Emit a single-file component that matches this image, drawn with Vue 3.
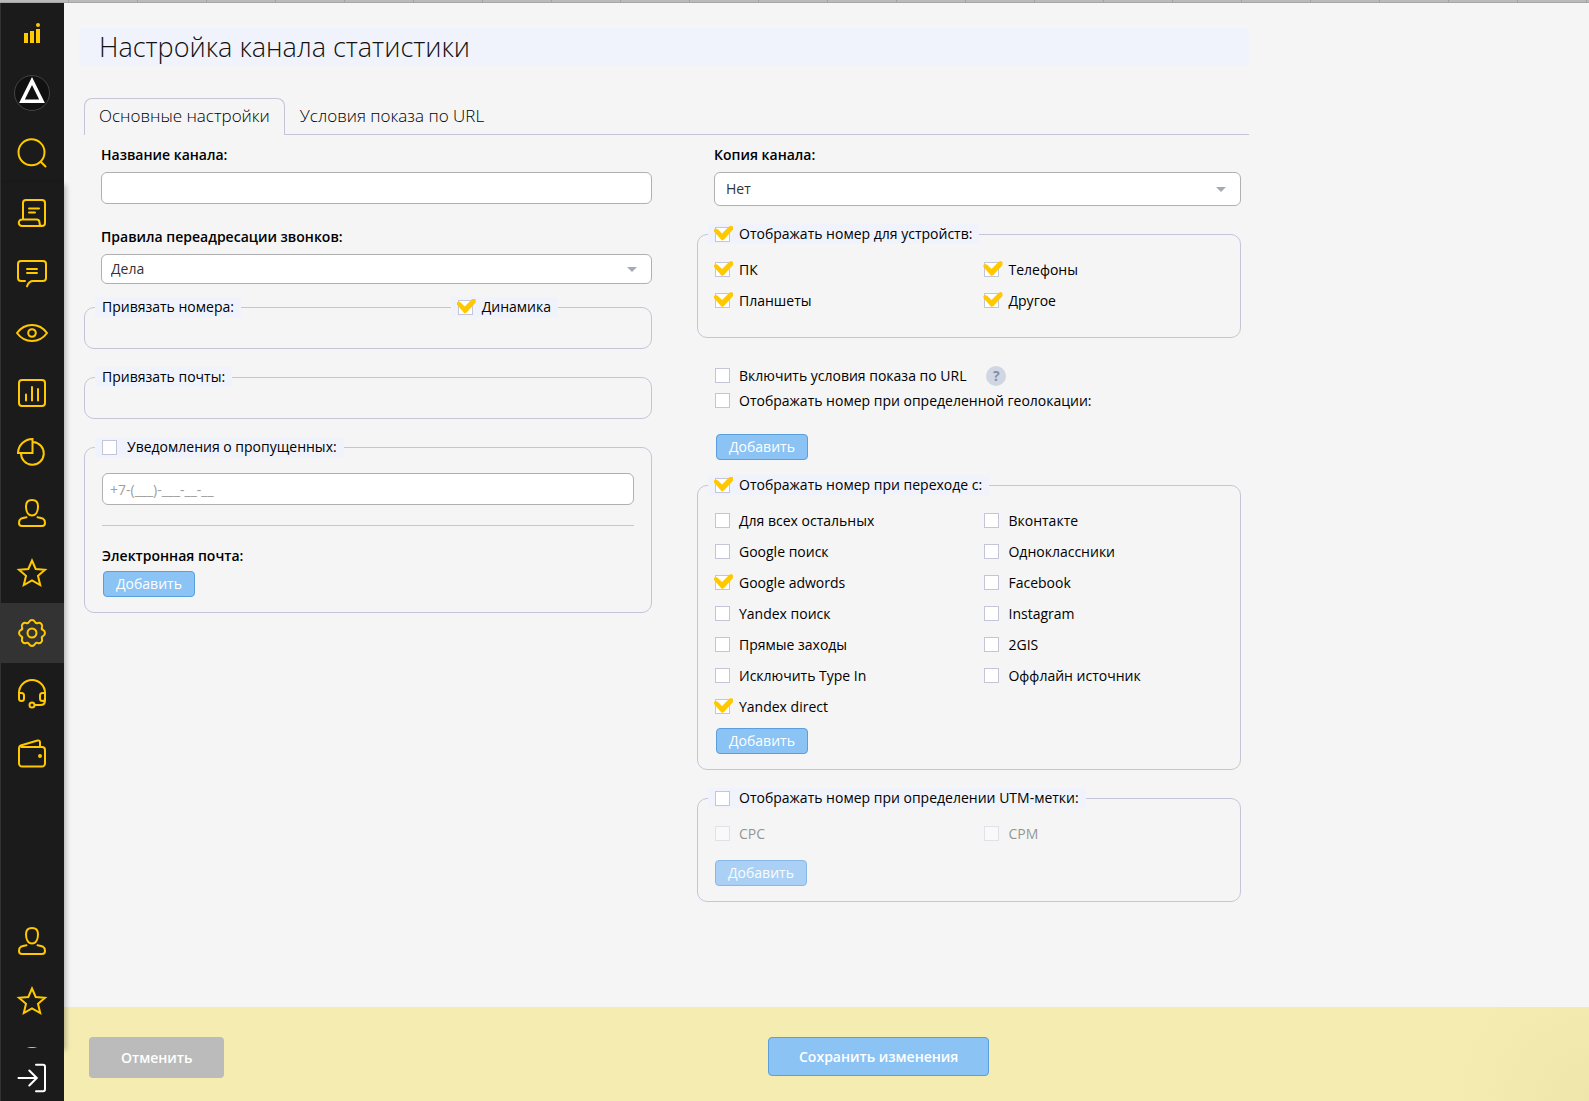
<template>
  <div class="app">
    <div class="strip"></div>
    <div class="shell">
      <aside class="sidebar">
        <div class="side-head">
          <a class="item" href="#" aria-label="Главная">
            <svg viewBox="0 0 32 32" class="icon solid">
              <path d="M8 16h4v10H8zM14 14h4v12h-4zM20 12h4v14h-4z" />
              <circle cx="22" cy="8" r="2" />
            </svg>
          </a>
          <a class="item" href="#" aria-label="Проект">
            <svg viewBox="0 0 38 38" class="avatar">
              <circle cx="19" cy="19" r="17.5" fill="#111" stroke="#444" />
              <path d="M19 7L29 27.2H9z" fill="none" stroke="#fff" stroke-width="3.6" />
            </svg>
          </a>
          <a class="item" href="#" aria-label="Поиск">
            <svg viewBox="0 0 32 32" class="icon"><path :d="icons.search" /></svg>
          </a>
        </div>
        <div class="side-body">
          <nav>
            <a
              v-for="name in topMenu"
              :key="name"
              class="item"
              :class="{ active: name === 'gear' }"
              href="#"
              :aria-label="name"
            >
              <svg viewBox="0 0 32 32" class="icon"><path :d="icons[name]" /></svg>
            </a>
          </nav>
          <nav class="pinned">
            <a v-for="name in bottomMenu" :key="name" class="item" href="#" :aria-label="name">
              <svg viewBox="0 0 32 32" class="icon"><path :d="icons[name]" /></svg>
            </a>
          </nav>
        </div>
        <a class="exit" href="#" aria-label="Выход">
          <svg viewBox="0 0 32 32" class="icon"><path :d="icons.exit" /></svg>
        </a>
      </aside>

      <main class="main">
        <div class="content">
          <h1>Настройка канала статистики</h1>

          <div class="tabs">
            <button
              v-for="(t, i) in tabs"
              :key="t"
              class="tab"
              :class="{ current: tab === i }"
              @click="tab = i"
            >{{ t }}</button>
          </div>

          <form class="columns" @submit.prevent>
            <div class="col">
              <div class="field">
                <label for="name">Название канала:</label>
                <input id="name" v-model="form.name" class="text" type="text" />
              </div>

              <div class="field rules">
                <label for="rules">Правила переадресации звонков:</label>
                <div class="select">
                  <select id="rules" v-model="form.rules">
                    <option>Дела</option>
                  </select>
                </div>
              </div>

              <fieldset class="group empty">
                <legend>Привязать номера:</legend>
                <label class="check dynamic">
                  <input v-model="form.dynamic" type="checkbox" />Динамика
                </label>
              </fieldset>

              <fieldset class="group empty">
                <legend>Привязать почты:</legend>
              </fieldset>

              <fieldset class="group missed">
                <legend>
                  <label class="check">
                    <input v-model="form.missed" type="checkbox" />Уведомления о пропущенных:
                  </label>
                </legend>
                <input
                  v-model="form.phone"
                  class="text"
                  type="tel"
                  aria-label="Телефон"
                  placeholder="+7-(___)-___-__-__"
                />
                <hr />
                <p class="caption">Электронная почта:</p>
                <button class="btn" type="button">Добавить</button>
              </fieldset>
            </div>

            <div class="col">
              <div class="field copy">
                <label for="copy">Копия канала:</label>
                <div class="select large">
                  <select id="copy" v-model="form.copy">
                    <option>Нет</option>
                  </select>
                </div>
              </div>

              <fieldset class="group devices">
                <legend>
                  <label class="check">
                    <input v-model="form.byDevice" type="checkbox" />Отображать номер для устройств:
                  </label>
                </legend>
                <div class="options">
                  <label v-for="d in devices" :key="d.label" class="check">
                    <input v-model="d.on" type="checkbox" />{{ d.label }}
                  </label>
                </div>
              </fieldset>

              <div class="extra">
                <div class="extra-row">
                  <label class="check">
                    <input v-model="form.byUrl" type="checkbox" />Включить условия показа по URL
                  </label>
                  <button class="help" type="button">?</button>
                </div>
                <div class="extra-row">
                  <label class="check">
                    <input v-model="form.byGeo" type="checkbox" />Отображать номер при определенной геолокации:
                  </label>
                </div>
                <button class="btn" type="button">Добавить</button>
              </div>

              <fieldset class="group">
                <legend>
                  <label class="check">
                    <input v-model="form.bySource" type="checkbox" />Отображать номер при переходе с:
                  </label>
                </legend>
                <div class="options">
                  <label v-for="s in sources" :key="s.label" class="check">
                    <input v-model="s.on" type="checkbox" />{{ s.label }}
                  </label>
                </div>
                <button class="btn" type="button">Добавить</button>
              </fieldset>

              <fieldset class="group utm">
                <legend>
                  <label class="check">
                    <input v-model="form.byUtm" type="checkbox" />Отображать номер при определении UTM-метки:
                  </label>
                </legend>
                <div class="options">
                  <label v-for="u in utm" :key="u.label" class="check" :class="{ off: !form.byUtm }">
                    <input v-model="u.on" type="checkbox" :disabled="!form.byUtm" />{{ u.label }}
                  </label>
                </div>
                <button class="btn" type="button" :disabled="!form.byUtm">Добавить</button>
              </fieldset>
            </div>
          </form>
        </div>

        <footer class="footer">
          <button class="cancel" type="button">Отменить</button>
          <button class="save" type="button">Сохранить изменения</button>
        </footer>
      </main>
    </div>
  </div>
</template>

<script setup>
import { ref, reactive } from "vue"

const tabs = ["Основные настройки", "Условия показа по URL"]
const tab = ref(0)

const form = reactive({
  name: "",
  rules: "Дела",
  copy: "Нет",
  phone: "",
  dynamic: true,
  missed: false,
  byDevice: true,
  byUrl: false,
  byGeo: false,
  bySource: true,
  byUtm: false
})

const devices = reactive([
  { label: "ПК", on: true },
  { label: "Телефоны", on: true },
  { label: "Планшеты", on: true },
  { label: "Другое", on: true }
])

const sources = reactive([
  { label: "Для всех остальных", on: false },
  { label: "Вконтакте", on: false },
  { label: "Google поиск", on: false },
  { label: "Одноклассники", on: false },
  { label: "Google adwords", on: true },
  { label: "Facebook", on: false },
  { label: "Yandex поиск", on: false },
  { label: "Instagram", on: false },
  { label: "Прямые заходы", on: false },
  { label: "2GIS", on: false },
  { label: "Исключить Type In", on: false },
  { label: "Оффлайн источник", on: false },
  { label: "Yandex direct", on: true }
])

const utm = reactive([
  { label: "CPC", on: false },
  { label: "CPM", on: false }
])

const topMenu = ["scroll", "chat", "eye", "bars", "pie", "user", "star", "gear", "headset", "wallet"]
const bottomMenu = ["user", "star", "headset"]

const icons = {
  search: "M2.5 15.3a13 13 0 1 0 26 0a13 13 0 1 0-26 0M24.5 24.5l5 5",
  scroll:
    "M7 22.5V6a3 3 0 0 1 3-3h16a3 3 0 0 1 3 3v20a3 3 0 0 1-3 3H6a3.2 3.2 0 0 1 0-6.5h14.5q3 0 3 3q0 3.5 2.5 3.5M13 11.5h10M13 15.5h6",
  chat:
    "M9 24H5a3 3 0 0 1-3-3V7a3 3 0 0 1 3-3h22a3 3 0 0 1 3 3v14a3 3 0 0 1-3 3H17q-4 0-6 5.3M11 12h10M11 16h10",
  eye: "M1 16C5 10.5 10 8 16 8s11 2.5 15 8c-4 5.5-9 8-15 8S5 21.5 1 16zM12.200 16a3.8 3.8 0 1 0 7.6 0a3.8 3.8 0 1 0-7.6 0",
  bars: "M6 3h20a3 3 0 0 1 3 3v20a3 3 0 0 1-3 3H6a3 3 0 0 1-3-3V6a3 3 0 0 1 3-3zM10 17.5v6M16 10v13.500M22 12v11.500",
  pie: "M16.5 2V16H2A14.5 14.5 0 0 1 16.5 2zM17 5A11.4 11.4 0 1 1 5 16",
  user:
    "M16 3c4 0 6 2.5 6 6.2c0 5-2 9.3-6 9.3s-6-4.3-6-9.3C10 5.5 12 3 16 3zM10.5 20.3C6 21 3 21.5 3 26c0 2 1 3 3 3h20c2 0 3-1 3-3c0-4.5-3-5-7.5-5.7",
  star: "M16 3.5l3.700 8.500l9.300 .8l-7 6l2.200 9.200l-8.200-4.700l-8.200 4.700l2.200-9.200l-7-6l9.300-.8z",
  gear:
    "M27.3 13.2A3.2 3.2 0 0 1 27.3 18.8A2.5 2.5 0 0 0 26 22A3.2 3.2 0 0 1 22 26A2.5 2.5 0 0 0 18.8 27.3A3.2 3.2 0 0 1 13.2 27.3A2.5 2.5 0 0 0 10 26A3.2 3.2 0 0 1 6 22A2.5 2.5 0 0 0 4.7 18.8A3.2 3.2 0 0 1 4.7 13.2A2.5 2.5 0 0 0 6 10A3.2 3.2 0 0 1 10 6A2.5 2.5 0 0 0 13.2 4.7A3.2 3.2 0 0 1 18.8 4.7A2.5 2.5 0 0 0 22 6A3.2 3.2 0 0 1 26 10A2.5 2.5 0 0 0 27.3 13.2zM11.5 16a4.5 4.5 0 1 0 9 0a4.5 4.5 0 1 0-9 0",
  headset:
    "M3 19V16a13 13 0 0 1 26 0v3M3 16h2.5q2.5 0 2.5 2.5v3q0 2.5-2.5 2.5q-2.5 0-2.5-2.5zM29 16h-2.5q-2.5 0-2.5 2.5v3q0 2.5 2.5 2.5q2.5 0 2.5-2.5zM29 21.5v2q0 4.5-4.5 4.5h-6M13.5 28a2.5 2.5 0 1 0 5 0a2.5 2.5 0 1 0-5 0",
  wallet:
    "M5.5 10H26a3 3 0 0 1 3 3v13.5a3 3 0 0 1-3 3H6a3 3 0 0 1-3-3V11.5q0-2.500 2.5-3.2L21.5 3.500q2.5-.5 2.5 2V10M23 19a1 1 0 1 0 2 0a1 1 0 1 0-2 0",
  exit: "M2.5 16H20.5M13.3 8.5L20.8 16l-7.5 7.5M20 2.8h7q2 0 2 2v22.4q0 2-2 2h-7"
}
</script>

<style>
body {
  margin: 0;
  background: #f5f5f5;
}
</style>

<style scoped>
.app {
  min-height: 100vh;
  display: flex;
  flex-direction: column;
  font-family: "Open Sans", "Noto Sans", sans-serif;
  font-size: 14px;
  line-height: 20px;
  color: #000;
}

.app *,
.app *::before,
.app *::after {
  box-sizing: border-box;
}

button,
input,
select {
  font: inherit;
}

button {
  cursor: pointer;
}

.strip {
  height: 3px;
  border-bottom: 1px solid #a6a6a6;
  background: repeating-linear-gradient(90deg, #bababa 0 68px, #a2a2a2 68px 69px);
}

.shell {
  flex: 1;
  display: flex;
}

.sidebar {
  flex: none;
  width: 64px;
  display: flex;
  flex-direction: column;
  background: #1b1b1b;
  color: #ffc800;
}

.side-head,
.side-body,
.exit {
  border-left: 1px solid #333;
}

.side-body {
  position: relative;
  z-index: 1;
  flex: 1;
  display: flex;
  flex-direction: column;
  justify-content: space-between;
  background: #1b1b1b;
  box-shadow: 2px 2px 5px rgba(0, 0, 0, 0.25);
}

.pinned {
  height: 137px;
  overflow: hidden;
}

.item {
  height: 60px;
  display: flex;
  align-items: center;
  justify-content: center;
  padding-right: 1px;
  color: inherit;
}

.item.active {
  background: #333;
}

.exit {
  position: relative;
  z-index: 1;
  height: 53px;
  padding: 7px 1px 0 0;
  display: flex;
  align-items: center;
  justify-content: center;
  background: #1b1b1b;
  color: #fff;
}

.icon {
  width: 32px;
  height: 32px;
  fill: none;
  stroke: currentColor;
  stroke-width: 2;
  stroke-linecap: round;
}

.icon.solid {
  fill: currentColor;
  stroke: none;
}

.avatar {
  width: 38px;
  height: 38px;
}

.main {
  flex: 1;
  min-width: 0;
  display: flex;
  flex-direction: column;
}

.content {
  width: 100%;
  max-width: 1185px;
  padding: 25px 0 40px 15px;
}

h1 {
  margin: 0 0 32px;
  padding: 0 20px;
  background: #f0f3fb;
  color: #111;
  font-size: 27px;
  line-height: 38px;
  font-weight: 300;
}

.tabs {
  display: flex;
  margin-left: 5px;
  border-bottom: 1px solid #c5c5d9;
}

.tab {
  height: 36px;
  padding: 0 14px 2px;
  border: 1px solid transparent;
  border-bottom: none;
  background: none;
  color: #000;
  font-size: 17px;
  font-weight: 300;
}

.tab.current {
  height: 37px;
  margin-bottom: -1px;
  padding-bottom: 3px;
  border-color: #c5c5d9;
  border-radius: 8px 8px 0 0;
  background: #f5f5f5;
}

.columns {
  display: grid;
  grid-template-columns: 568fr 544fr;
  column-gap: 45px;
  align-items: start;
  padding: 10px 8px 0 5px;
}

.field {
  display: flex;
  flex-direction: column;
  gap: 7px;
  padding-left: 17px;
}

.field > label,
.caption {
  margin: 0;
  font-weight: 600;
}

.rules {
  margin: 23px 0 13px;
}

.copy {
  margin-bottom: 18px;
}

.text {
  width: 100%;
  height: 32px;
  padding: 0 7px;
  border: 1px solid #b0b0b0;
  border-radius: 6px;
  background: #fff;
}

.text::placeholder {
  color: #a0a0a0;
}

.select {
  display: grid;
  align-items: center;
}

.select select {
  grid-area: 1 / 1;
  height: 30px;
  padding: 0 9px;
  border: 1px solid #b0b0b0;
  border-radius: 6px;
  appearance: none;
  background: #fff;
  color: #333;
}

.select.large select {
  height: 34px;
  padding: 0 11px;
}

.select::after {
  content: "";
  grid-area: 1 / 1;
  justify-self: end;
  margin-right: 15px;
  border: 5px solid transparent;
  border-top-color: #a5abb3;
  border-bottom: none;
  pointer-events: none;
}

.group {
  min-width: 0;
  margin: 0 0 18px;
  padding: 0 17px 15px;
  border: 1px solid #c5c5d9;
  border-radius: 10px;
}

.group legend {
  margin-left: -7px;
  padding: 0 7px;
  background: #f0f3fb;
}

.group.empty {
  height: 52px;
}

.dynamic {
  width: fit-content;
  margin: -20px 76px 0 auto;
  padding: 0 7px;
  background: #f0f3fb;
}

.missed .text {
  display: block;
  margin-top: 16px;
}

.missed hr {
  margin: 20px 0;
  border: none;
  border-top: 1px solid #c5c5d9;
}

.missed .caption {
  margin-bottom: 5px;
}

.devices {
  padding-bottom: 21px;
  margin-bottom: 25px;
}

.check {
  display: flex;
  align-items: center;
  gap: 9px;
}

.check input {
  position: relative;
  flex: none;
  width: 15px;
  height: 15px;
  margin: 0;
  border: 1px solid #c5c5d9;
  appearance: none;
  background: #fff;
}

.check input:checked::after {
  content: "";
  position: absolute;
  top: -2px;
  left: -2px;
  width: 20px;
  height: 16px;
  background: #ffc800;
  clip-path: polygon(0 6px, 0 4px, 2px 3px, 4px 4px, 8px 8px, 15px 1px, 17px 0, 19px 1px, 19px 4px, 10px 14px, 8px 15px, 7px 14px);
}

.missed .check {
  gap: 10px;
}

.check.off {
  opacity: 0.4;
}

.options {
  display: grid;
  grid-template-columns: 270fr 239fr;
  grid-auto-rows: 31px;
  padding-top: 10px;
}

.extra {
  margin-bottom: 15px;
  padding-left: 18px;
}

.extra-row {
  display: flex;
  align-items: center;
  gap: 20px;
  height: 25px;
}

.help {
  width: 20px;
  height: 20px;
  padding: 0;
  border: none;
  border-radius: 50%;
  background: #d0d6e2;
  color: #8090b0;
  font-size: 14px;
  font-weight: 700;
}

.btn {
  display: block;
  height: 26px;
  margin-left: 1px;
  padding: 0 12px;
  border: 1px solid #5a9fdc;
  border-radius: 4px;
  background: #8bc3f5;
  color: #fff;
}

.extra .btn {
  margin-top: 21px;
}

.options + .btn {
  margin-top: 6px;
}

.utm .options + .btn {
  margin: 11px 0 0;
}

.btn:disabled {
  opacity: 0.7;
}

.footer {
  display: grid;
  grid-template-columns: 679px auto;
  justify-content: start;
  align-items: start;
  margin-top: auto;
  height: 94px;
  padding: 30px 25px 0;
  background: radial-gradient(circle at 100% 100%, #efe6ab 0, #f4ecb1 140px);
}

.cancel,
.save {
  justify-self: start;
  border-radius: 4px;
  color: #fff;
  font-weight: 600;
}

.cancel {
  height: 41px;
  padding: 0 32px;
  border: none;
  background: #bbb;
}

.save {
  height: 39px;
  padding: 0 30px;
  border: 1px solid #5a9fdc;
  background: #8bc3f5;
}
</style>
